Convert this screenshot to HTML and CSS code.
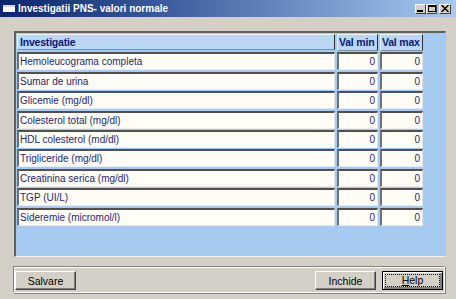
FILE: index.html
```html
<!DOCTYPE html>
<html lang="ro">
<head>
    <meta charset="UTF-8">
    <title>Investigatii PNS- valori normale</title>
    <link rel="stylesheet" href="styles.css">
</head>
<body>
    <div class="window">
        <div class="titlebar">
            <span class="app-icon"></span>
            <span class="title">Investigatii PNS- valori normale</span>
            <div class="controls">
                <span class="ctl"><svg width="7" height="6" viewBox="0 0 7 6"><rect x="0" y="4" width="6" height="2" fill="#000"/></svg></span>
                <span class="ctl"><svg width="8" height="7" viewBox="0 0 8 7"><rect x="0.5" y="0.5" width="7" height="6" fill="none" stroke="#000"/><rect x="0" y="0" width="8" height="2" fill="#000"/></svg></span>
                <span class="ctl close"><svg width="8" height="7" viewBox="0 0 8 7"><path d="M0.5 0 L7.5 7 M7.5 0 L0.5 7" stroke="#000" stroke-width="1.5"/></svg></span>
            </div>
        </div>

        <div class="content">
            <div class="grid-panel">
                <div class="grid">
                    <div class="head">Investigatie</div>
                    <div class="head">Val min</div>
                    <div class="head">Val max</div>

                    <div class="cell">Hemoleucograma completa</div>
                    <div class="cell num">0</div>
                    <div class="cell num">0</div>

                    <div class="cell">Sumar de urina</div>
                    <div class="cell num">0</div>
                    <div class="cell num">0</div>

                    <div class="cell">Glicemie (mg/dl)</div>
                    <div class="cell num">0</div>
                    <div class="cell num">0</div>

                    <div class="cell">Colesterol total (mg/dl)</div>
                    <div class="cell num">0</div>
                    <div class="cell num">0</div>

                    <div class="cell">HDL colesterol (md/dl)</div>
                    <div class="cell num">0</div>
                    <div class="cell num">0</div>

                    <div class="cell">Trigliceride (mg/dl)</div>
                    <div class="cell num">0</div>
                    <div class="cell num">0</div>

                    <div class="cell">Creatinina serica (mg/dl)</div>
                    <div class="cell num">0</div>
                    <div class="cell num">0</div>

                    <div class="cell">TGP (UI/L)</div>
                    <div class="cell num">0</div>
                    <div class="cell num">0</div>

                    <div class="cell">Sideremie (micromol/l)</div>
                    <div class="cell num">0</div>
                    <div class="cell num">0</div>
                </div>
            </div>

            <div class="footer">
                <button class="btn">Salvare</button>
                <div class="spacer"></div>
                <button class="btn">Inchide</button>
                <button class="btn default"><span class="focus"><u>H</u>elp</span></button>
            </div>
        </div>
    </div>
</body>
</html>
```

FILE: styles.css
```css
body {
    margin: 0;
    background-color: #d4d0c8;
    font-family: "Liberation Sans", Arial, sans-serif;
}
.window {
    width: 456px;
    height: 299px;
    background-color: #d4d0c8;
    overflow: hidden;
}
.titlebar {
    height: 17px;
    display: flex;
    align-items: center;
    background: linear-gradient(to right, #0a246a 0%, #3a5a9c 35%, #a6caf0 100%);
    color: white;
}
.app-icon {
    width: 12px;
    height: 5px;
    margin-left: 3px;
    margin-right: 3px;
    background-color: white;
    border-top: 2px solid #d0d8e8;
}
.title {
    font-size: 10px;
    font-weight: bold;
    flex: 1;
}
.controls {
    display: flex;
    margin-right: 5px;
}
.ctl {
    width: 9px;
    height: 8px;
    background-color: #d4d0c8;
    border-top: 1px solid white;
    border-left: 1px solid white;
    border-right: 1px solid #404040;
    border-bottom: 1px solid #404040;
    display: flex;
    align-items: center;
    justify-content: center;
}
.ctl.close {
    margin-left: 2px;
    width: 10px;
}
.content {
    padding: 14px 10px 0 14px;
}
.grid-panel {
    height: 222px;
    background-color: #a6caf0;
    border-top: 2px solid #606060;
    border-left: 2px solid #606060;
    border-right: 1px solid #c0c0c0;
    border-bottom: 1px solid #f0f0f0;
    padding: 1px 0 0 1px;
}
.grid {
    display: grid;
    grid-template-columns: 318px 41px 43px;
    grid-template-rows: 17px;
    grid-auto-rows: 18px;
    column-gap: 2px;
    row-gap: 1.4px;
}
.head {
    background-color: #bcd6f6;
    border-top: 1px solid #e8f2ff;
    border-left: 1px solid #e8f2ff;
    border-right: 1px solid #303030;
    border-bottom: 1px solid #7890b0;
    color: #0a1a70;
    font-weight: bold;
    font-size: 10.5px;
    letter-spacing: -0.2px;
    line-height: 15px;
    padding-left: 1px;
    white-space: nowrap;
    overflow: hidden;
}
.grid .head:first-child {
    margin-bottom: 1px;
    padding-left: 2px;
}
.cell {
    background-color: #fffdf6;
    border-top: 2px solid #505050;
    border-left: 2px solid #707070;
    border-right: 1px solid #e0e8f0;
    border-bottom: 1px solid #e8eef8;
    color: #28286a;
    font-size: 10px;
    line-height: 15px;
    padding-left: 1px;
    white-space: nowrap;
}
.cell.num {
    text-align: right;
    padding-right: 2px;
}
.footer {
    margin-top: 9px;
    margin-left: -1px;
    width: 428px;
    height: 25px;
    border-top: 1px solid #808080;
    border-left: 1px solid #808080;
    border-right: 1px solid white;
    border-bottom: 1px solid white;
    box-shadow: inset 1px 1px 0 white, 1px 1px 0 #808080;
    display: flex;
    align-items: center;
    padding: 0 1px;
    gap: 6px;
}
.spacer {
    flex: 1;
}
.btn {
    width: 61px;
    height: 19px;
    padding: 0;
    background-color: #d4d0c8;
    border-top: 1px solid white;
    border-left: 1px solid white;
    border-right: 1px solid #404040;
    border-bottom: 1px solid #404040;
    box-shadow: inset -1px -1px 0 #808080;
    font-family: "Liberation Sans", Arial, sans-serif;
    font-size: 10.5px;
    color: #000;
    margin-top: 2px;
}
.btn.default {
    border: 1px solid #000;
    box-shadow: inset 1px 1px 0 white, inset -2px -2px 0 #808080;
    padding: 2px;
}
.focus {
    display: block;
    border: 1px dotted #000;
    line-height: 11px;
}
```
